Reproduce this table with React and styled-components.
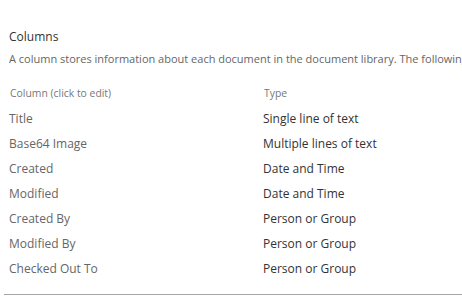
import React from 'react'
import styled, { createGlobalStyle } from 'styled-components'

const GlobalStyle = createGlobalStyle`
    html, body {
        margin: 0;
        padding: 0;
        background: #ffffff;
        overflow: hidden;
    }
    body {
        font-family: "Segoe UI", "Open Sans", sans-serif;
    }
`

const Page = styled.div`
    width: 462px;
    height: 296px;
    box-sizing: border-box;
    padding: 28px 0 0 4px;
`

const Section = styled.div`
    border-bottom: 1px solid #a6a6a6;
    padding-left: 5px;
    height: 267px;
    box-sizing: border-box;
`

const Heading = styled.h2`
    margin: 0;
    font-size: 12px;
    font-weight: 400;
    line-height: 18px;
    color: #333333;
`

const Description = styled.p`
    margin: 5px 0 0 0;
    font-size: 11px;
    line-height: 16px;
    color: #666666;
    white-space: nowrap;
    overflow: hidden;
`

const Table = styled.div`
    display: grid;
    grid-template-columns: 254px 1fr;
    margin-top: 19px;
`

const HeaderCell = styled.div`
    font-size: 10.4px;
    line-height: 14px;
    color: #777777;
    padding-left: 1px;
    margin-bottom: 10px;
`

const Cell = styled.div`
    font-size: 12px;
    line-height: 18px;
    height: 25px;
    color: ${p => (p.$dark ? '#333333' : '#666666')};
    white-space: nowrap;
`

const columns = [
    ['Title', 'Single line of text'],
    ['Base64 Image', 'Multiple lines of text'],
    ['Created', 'Date and Time'],
    ['Modified', 'Date and Time'],
    ['Created By', 'Person or Group'],
    ['Modified By', 'Person or Group'],
    ['Checked Out To', 'Person or Group'],
]

const App = () => {
    return (
        <>
            <GlobalStyle />
            <Page>
                <Section>
                    <Heading>Columns</Heading>
                    <Description>
                        A column stores information about each document in the document library. The following columns are currently available in this document library:
                    </Description>
                    <Table>
                        <HeaderCell>Column (click to edit)</HeaderCell>
                        <HeaderCell>Type</HeaderCell>
                        {columns.map(([name, type]) => (
                            <React.Fragment key={name}>
                                <Cell>{name}</Cell>
                                <Cell $dark>{type}</Cell>
                            </React.Fragment>
                        ))}
                    </Table>
                </Section>
            </Page>
        </>
    )
}

export default App
